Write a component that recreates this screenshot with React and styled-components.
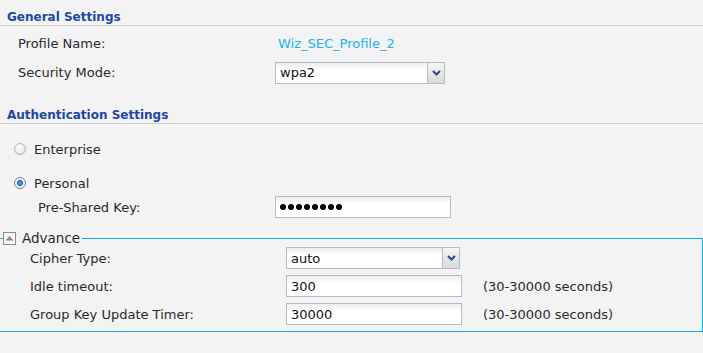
import React from "react";
import styled, { createGlobalStyle } from "styled-components";

const Global = createGlobalStyle`
  html, body {
    margin: 0;
    padding: 0;
    background: #f3f3f3;
  }
  body {
    font-family: "DejaVu Sans", "Liberation Sans", sans-serif;
    font-size: 13px;
    color: #2a2a2a;
    overflow: hidden;
  }
`;

const Page = styled.div`
  width: 703px;
  height: 353px;
  background: #f3f3f3;
`;

const SectionTitle = styled.div`
  height: 26px;
  line-height: 16px;
  padding: 9px 0 0 7px;
  box-sizing: border-box;
  border-bottom: 1px solid #cfcfcf;
  margin-top: ${(p) => p.$top || 0}px;
  font-weight: bold;
  font-size: 12px;
  color: #1c47a4;
`;

const Rows = styled.div`
  display: flex;
  flex-direction: column;
  gap: ${(p) => p.$gap || 0}px;
  padding: ${(p) => p.$pad || "0"};
`;

const Row = styled.div`
  display: grid;
  grid-template-columns: ${(p) => p.$label}px auto 1fr;
  align-items: center;
  height: ${(p) => p.$h || 22}px;
  padding-left: ${(p) => p.$indent}px;
`;

const Label = styled.span`
  white-space: nowrap;
`;

const Value = styled.span`
  color: #22b2ee;
  padding-left: 3px;
`;

const Hint = styled.span`
  padding-left: 21px;
  white-space: nowrap;
`;

const Box = styled.div`
  box-sizing: border-box;
  width: ${(p) => p.$w}px;
  height: 22px;
  border: 1px solid #b6b8cb;
  background: linear-gradient(#ecedef 0, #ffffff 7px, #ffffff 100%);
  display: flex;
  align-items: center;
  padding-left: 4px;
  font-size: 13px;
  color: #111;
`;

const SelectBox = styled(Box)`
  padding-left: 0;
  span {
    flex: 1;
    padding-left: 4px;
  }
`;

const Arrow = styled.div`
  width: 16px;
  height: 20px;
  border-left: 1px solid #b6b8cb;
  background: linear-gradient(#f6f6f6, #d9d9dc);
  display: flex;
  align-items: center;
  justify-content: center;
`;

const Dots = styled.span`
  display: flex;
  gap: 2px;
  i {
    width: 6px;
    height: 6px;
    border-radius: 50%;
    background: #000;
  }
`;

const RadioRow = styled.label`
  display: flex;
  align-items: center;
  gap: 8px;
  height: 20px;
  padding-left: 14px;
`;

const Radio = styled.span`
  box-sizing: border-box;
  width: 12px;
  height: 12px;
  border-radius: 50%;
  border: 1px solid ${(p) => (p.$on ? "#6f7a86" : "#b4b4b4")};
  background: ${(p) =>
    p.$on
      ? "radial-gradient(circle, #5fb4f0 0, #1a66b8 2.5px, #e6eef5 3.5px, #ffffff 5px)"
      : "radial-gradient(circle at 40% 35%, #ffffff 0, #dcdcdc 100%)"};
`;

const Fieldset = styled.fieldset`
  margin: 13px 0 0 0;
  padding: 2px 0 6px 0;
  border: 1px solid #12aae9;
  border-left: none;
  min-width: 0;
`;

const Legend = styled.legend`
  display: flex;
  align-items: center;
  gap: 6px;
  height: 14px;
  padding: 0 2px 0 0;
  margin-left: 3px;
  font-size: 13.5px;
`;

const Toggle = styled.span`
  box-sizing: border-box;
  width: 13px;
  height: 13px;
  border: 1px solid #8d8d8d;
  background: #f7f7f7;
  display: flex;
  align-items: center;
  justify-content: center;
`;

function Chevron() {
  return (
    <svg width="9" height="6" viewBox="0 0 9 6">
      <path d="M1 1 L4.5 4.5 L8 1" fill="none" stroke="#2d4784" strokeWidth="2" />
    </svg>
  );
}

function Select({ value, width }) {
  return (
    <SelectBox $w={width}>
      <span>{value}</span>
      <Arrow>
        <Chevron />
      </Arrow>
    </SelectBox>
  );
}

export default function App() {
  return (
    <Page>
      <Global />
      <SectionTitle>General Settings</SectionTitle>
      <Rows $pad="3px 0 0 0">
        <Row $label={257} $indent={18} $h={29}>
          <Label>Profile Name:</Label>
          <Value>Wiz_SEC_Profile_2</Value>
        </Row>
        <Row $label={257} $indent={18} $h={29}>
          <Label>Security Mode:</Label>
          <Select value="wpa2" width={170} />
        </Row>
      </Rows>

      <SectionTitle $top={11}>Authentication Settings</SectionTitle>
      <Rows $pad="15px 0 0 0" $gap={14}>
        <RadioRow>
          <Radio />
          Enterprise
        </RadioRow>
        <RadioRow>
          <Radio $on />
          Personal
        </RadioRow>
      </Rows>
      <Rows $pad="3px 0 0 0">
        <Row $label={237} $indent={38}>
          <Label>Pre-Shared Key:</Label>
          <Box $w={176}>
            <Dots>
              {Array.from({ length: 8 }).map((_, i) => (
                <i key={i} />
              ))}
            </Dots>
          </Box>
        </Row>
      </Rows>

      <Fieldset>
        <Legend>
          <Toggle>
            <svg width="9" height="6" viewBox="0 0 9 6">
              <path d="M0.5 5.5 L4.5 1 L8.5 5.5 Z" fill="#8a8a8a" />
            </svg>
          </Toggle>
          Advance
        </Legend>
        <Rows $gap={6}>
          <Row $label={256} $indent={30}>
            <Label>Cipher Type:</Label>
            <Select value="auto" width={174} />
          </Row>
          <Row $label={256} $indent={30}>
            <Label>Idle timeout:</Label>
            <Box $w={176}>300</Box>
            <Hint>(30-30000 seconds)</Hint>
          </Row>
          <Row $label={256} $indent={30}>
            <Label>Group Key Update Timer:</Label>
            <Box $w={176}>30000</Box>
            <Hint>(30-30000 seconds)</Hint>
          </Row>
        </Rows>
      </Fieldset>
    </Page>
  );
}
